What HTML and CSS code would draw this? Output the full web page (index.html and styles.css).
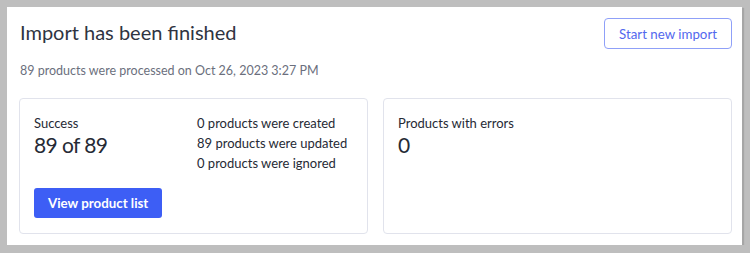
FILE: index.html
```html
<!DOCTYPE html>
<html lang="en">
<head>
    <meta charset="utf-8" />
    <link rel="stylesheet" href="styles.css">
    <title>Import finished</title>
</head>
<body>
    <div class="panel">
        <div class="head">
            <div class="headtext">
                <h1 class="title">Import has been finished</h1>
                <div class="subtitle">89 products were processed on Oct 26, 2023 3:27 PM</div>
            </div>
            <button class="outlinebut">Start new import</button>
        </div>
        <div class="cards">
            <div class="card">
                <div class="cardrow">
                    <div class="stat">
                        <div class="label">Success</div>
                        <div class="number">89 of 89</div>
                    </div>
                    <ul class="details">
                        <li>0 products were created</li>
                        <li>89 products were updated</li>
                        <li>0 products were ignored</li>
                    </ul>
                </div>
                <button class="mainbut">View product list</button>
            </div>
            <div class="card">
                <div class="stat">
                    <div class="label">Products with errors</div>
                    <div class="number">0</div>
                </div>
            </div>
        </div>
    </div>
</body>
</html>
```
FILE: styles.css
```css
body {
    margin: 0;
    padding: 7px 0 0 7px;
    background-color: #bebebe;
    font-family: Lato, "Open Sans", sans-serif;
    color: #262a35;
}
.panel {
    width: 735px;
    height: 238px;
    box-sizing: border-box;
    padding: 11px 10px 11px 12px;
    background-color: #fff;
    box-shadow: 2px 1px 1px rgba(0, 0, 0, 0.12);
}
.head {
    display: flex;
    justify-content: space-between;
    align-items: flex-start;
}
.headtext {
    padding-left: 1px;
}
.title {
    margin: 0;
    font-size: 20px;
    line-height: 28px;
    font-weight: 400;
    color: #2f3441;
}
.subtitle {
    margin-top: 16px;
    font-size: 12.5px;
    line-height: 18px;
    color: #6b6f7d;
}
.outlinebut {
    height: 31px;
    padding: 0 14px;
    border: 1px solid #8fa0f8;
    border-radius: 4px;
    background-color: #fff;
    color: #5368ee;
    font-family: inherit;
    font-size: 13.3px;
}
.cards {
    display: flex;
    gap: 15px;
    margin-top: 18px;
}
.card {
    flex: 1;
    height: 136px;
    box-sizing: border-box;
    padding: 14px 14px;
    border: 1px solid #e1e3ec;
    border-radius: 4px;
}
.cardrow {
    display: flex;
}
.stat {
    width: 163px;
    flex-shrink: 0;
}
.label {
    font-size: 13px;
    line-height: 20px;
}
.number {
    font-size: 21px;
    line-height: 24px;
    letter-spacing: -0.6px;
}
.details {
    margin: 0;
    padding: 0;
    list-style: none;
    font-size: 13px;
    line-height: 20px;
    white-space: nowrap;
}
.mainbut {
    margin-top: 15px;
    height: 30px;
    padding: 0 14px;
    border: none;
    border-radius: 3px;
    background-color: #3d5ef5;
    color: #fff;
    font-family: inherit;
    font-size: 13.3px;
    font-weight: 700;
}
```
